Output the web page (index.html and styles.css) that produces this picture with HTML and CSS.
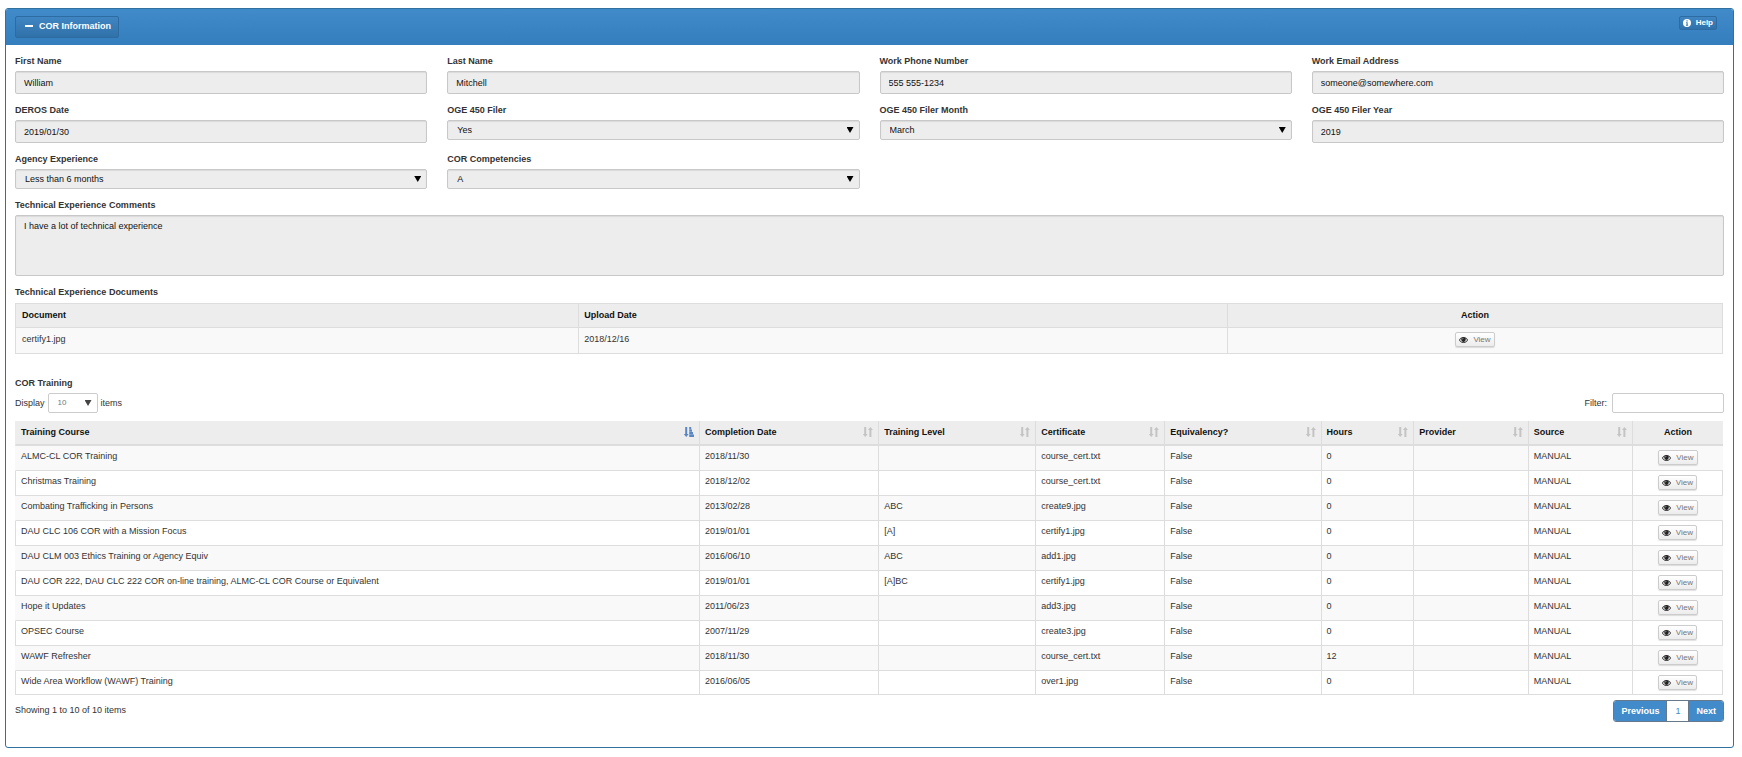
FILE: index.html
```html
<!DOCTYPE html>
<html lang="en">
<head>
<meta charset="utf-8">
<title>COR Information</title>
<link rel="stylesheet" href="styles.css">
</head>
<body>
<svg class="sprite" aria-hidden="true">
  <symbol id="i-eye" viewBox="0 0 18 12"><path fill-rule="evenodd" d="M9 0C4.500 0 1.500 3 0 6c1.500 3 4.500 6 9 6s7.500-3 9-6c-1.500-3-4.500-6-9-6zM9 10.500C5.500 10.500 3.200 8.500 1.900 6c.8-1.500 2-2.800 3.500-3.600a4.500 4.500 0 1 0 7.200 0C14.100 3.200 15.300 4.500 16.100 6c-1.300 2.500-3.600 4.500-7.100 4.500zM8.500 2.300a2 2 0 0 0-2 2.200h1.200c0-.7.400-1.100 1.100-1.200z"/></symbol>
  <symbol id="i-sort" viewBox="0 0 10 10"><path d="M1.200 0h2v7h1.500L2.200 10-.2 7h1.400zM6.400 10h2V3h1.500L7.400 0 5 3h1.400z"/></symbol>
  <symbol id="i-sorted" viewBox="0 0 10 10"><path d="M1.200 0h2v7h1.500L2.200 10-.2 7h1.400zM5.200 0h2v2.300h-2zM5.200 2.600h2.800v2.200H5.200zM5.200 5.100h3.800v2.200H5.200zM5.200 7.600H10V10H5.200z"/></symbol>
  <symbol id="i-info" viewBox="0 0 10 10"><path fill-rule="evenodd" d="M5 0a5 5 0 1 1 0 10A5 5 0 0 1 5 0zM4.300 1.600v1.400h1.500V1.600zM3.700 4v1h.7v2.300h-.7v1h2.700v-1h-.6V4z"/></symbol>
</svg>
<main class="panel">
  <header class="panel-head">
    <button class="btn-blue toggle" type="button"><span class="minus"></span>COR Information</button>
    <button class="btn-blue help" type="button"><svg class="info"><use href="#i-info"/></svg>Help</button>
  </header>
  <div class="panel-body">
    <form class="fields">
      <div class="field"><label for="first">First Name</label><input class="control" id="first" value="William" readonly></div>
      <div class="field"><label for="last">Last Name</label><input class="control" id="last" value="Mitchell" readonly></div>
      <div class="field"><label for="phone">Work Phone Number</label><input class="control" id="phone" value="555 555-1234" readonly></div>
      <div class="field"><label for="email">Work Email Address</label><input class="control" id="email" value="someone@somewhere.com" readonly></div>
      <div class="field"><label for="deros">DEROS Date</label><input class="control" id="deros" value="2019/01/30" readonly></div>
      <div class="field"><label for="oge">OGE 450 Filer</label><span class="pick"><select class="control" id="oge" disabled><option>Yes</option></select></span></div>
      <div class="field"><label for="month">OGE 450 Filer Month</label><span class="pick"><select class="control" id="month" disabled><option>March</option></select></span></div>
      <div class="field"><label for="year">OGE 450 Filer Year</label><input class="control" id="year" value="2019" readonly></div>
      <div class="field"><label for="agency">Agency Experience</label><span class="pick"><select class="control" id="agency" disabled><option>Less than 6 months</option></select></span></div>
      <div class="field"><label for="comp">COR Competencies</label><span class="pick"><select class="control" id="comp" disabled><option>A</option></select></span></div>
      <div class="field wide"><label for="comments">Technical Experience Comments</label><textarea class="control" id="comments" readonly>I have a lot of technical experience</textarea></div>
    </form>

    <h2 class="heading">Technical Experience Documents</h2>
    <table class="grid docs">
      <colgroup><col class="d-doc"><col class="d-date"><col class="d-act"></colgroup>
      <thead><tr><th>Document</th><th>Upload Date</th><th class="act">Action</th></tr></thead>
      <tbody><tr><td>certify1.jpg</td><td>2018/12/16</td><td class="act"><button class="view" type="button"><svg class="eye"><use href="#i-eye"/></svg>View</button></td></tr></tbody>
    </table>

    <h2 class="heading training-title">COR Training</h2>
    <div class="tools">
      <label class="display">Display <span class="pick length"><select><option>10</option></select></span> items</label>
      <label class="filter">Filter: <input type="search"></label>
    </div>
    <table class="grid training">
      <colgroup><col class="c-course"><col class="c-date"><col class="c-level"><col class="c-cert"><col class="c-equiv"><col class="c-hours"><col class="c-prov"><col class="c-src"><col class="c-act"></colgroup>
      <thead><tr>
        <th><div class="sort on">Training Course<svg><use href="#i-sorted"/></svg></div></th>
        <th><div class="sort">Completion Date<svg><use href="#i-sort"/></svg></div></th>
        <th><div class="sort">Training Level<svg><use href="#i-sort"/></svg></div></th>
        <th><div class="sort">Certificate<svg><use href="#i-sort"/></svg></div></th>
        <th><div class="sort">Equivalency?<svg><use href="#i-sort"/></svg></div></th>
        <th><div class="sort">Hours<svg><use href="#i-sort"/></svg></div></th>
        <th><div class="sort">Provider<svg><use href="#i-sort"/></svg></div></th>
        <th><div class="sort">Source<svg><use href="#i-sort"/></svg></div></th>
        <th class="act">Action</th>
      </tr></thead>
      <tbody>
        <tr><td>ALMC-CL COR Training</td><td>2018/11/30</td><td></td><td>course_cert.txt</td><td>False</td><td>0</td><td></td><td>MANUAL</td><td class="act"><button class="view" type="button"><svg class="eye"><use href="#i-eye"/></svg>View</button></td></tr>
        <tr><td>Christmas Training</td><td>2018/12/02</td><td></td><td>course_cert.txt</td><td>False</td><td>0</td><td></td><td>MANUAL</td><td class="act"><button class="view" type="button"><svg class="eye"><use href="#i-eye"/></svg>View</button></td></tr>
        <tr><td>Combating Trafficking in Persons</td><td>2013/02/28</td><td>ABC</td><td>create9.jpg</td><td>False</td><td>0</td><td></td><td>MANUAL</td><td class="act"><button class="view" type="button"><svg class="eye"><use href="#i-eye"/></svg>View</button></td></tr>
        <tr><td>DAU CLC 106 COR with a Mission Focus</td><td>2019/01/01</td><td>[A]</td><td>certify1.jpg</td><td>False</td><td>0</td><td></td><td>MANUAL</td><td class="act"><button class="view" type="button"><svg class="eye"><use href="#i-eye"/></svg>View</button></td></tr>
        <tr><td>DAU CLM 003 Ethics Training or Agency Equiv</td><td>2016/06/10</td><td>ABC</td><td>add1.jpg</td><td>False</td><td>0</td><td></td><td>MANUAL</td><td class="act"><button class="view" type="button"><svg class="eye"><use href="#i-eye"/></svg>View</button></td></tr>
        <tr><td>DAU COR 222, DAU CLC 222 COR on-line training, ALMC-CL COR Course or Equivalent</td><td>2019/01/01</td><td>[A]BC</td><td>certify1.jpg</td><td>False</td><td>0</td><td></td><td>MANUAL</td><td class="act"><button class="view" type="button"><svg class="eye"><use href="#i-eye"/></svg>View</button></td></tr>
        <tr><td>Hope it Updates</td><td>2011/06/23</td><td></td><td>add3.jpg</td><td>False</td><td>0</td><td></td><td>MANUAL</td><td class="act"><button class="view" type="button"><svg class="eye"><use href="#i-eye"/></svg>View</button></td></tr>
        <tr><td>OPSEC Course</td><td>2007/11/29</td><td></td><td>create3.jpg</td><td>False</td><td>0</td><td></td><td>MANUAL</td><td class="act"><button class="view" type="button"><svg class="eye"><use href="#i-eye"/></svg>View</button></td></tr>
        <tr><td>WAWF Refresher</td><td>2018/11/30</td><td></td><td>course_cert.txt</td><td>False</td><td>12</td><td></td><td>MANUAL</td><td class="act"><button class="view" type="button"><svg class="eye"><use href="#i-eye"/></svg>View</button></td></tr>
        <tr><td>Wide Area Workflow (WAWF) Training</td><td>2016/06/05</td><td></td><td>over1.jpg</td><td>False</td><td>0</td><td></td><td>MANUAL</td><td class="act"><button class="view" type="button"><svg class="eye"><use href="#i-eye"/></svg>View</button></td></tr>
      </tbody>
    </table>
    <footer class="foot">
      <span>Showing 1 to 10 of 10 items</span>
      <nav class="pager" aria-label="Pages"><a href="#">Previous</a><a class="current" href="#">1</a><a href="#">Next</a></nav>
    </footer>
  </div>
</main>
</body>
</html>
```

FILE: styles.css
```css
* { box-sizing: border-box; }
body {
  margin: 8px 8px 8px 5px;
  background: #fff;
  color: #333;
  font: 9px/14px "Liberation Sans", Arial, sans-serif;
}
button, input, select, textarea { font: inherit; margin: 0; }
.sprite { display: none; }
svg { display: block; fill: currentColor; }

.panel { border: 1px solid #31719f; border-radius: 3px; overflow: hidden; }
.panel-head {
  display: flex;
  justify-content: space-between;
  align-items: flex-start;
  margin: -1px -1px 0;
  padding: 8px 17px 7px 10px;
  background: linear-gradient(#428bca, #357ebd);
}
.btn-blue {
  display: flex;
  align-items: center;
  border: 1px solid #2d6ca2;
  border-radius: 2px;
  background: linear-gradient(#3f86c3, #3071a9);
  color: #fff;
  font-weight: bold;
}
.toggle { gap: 6px; height: 22px; padding: 0 7px 2px 9px; }
.minus { width: 8px; height: 2px; background: #fff; }
.help { gap: 5px; height: 14px; padding: 0 3px; line-height: 12px; font-size: 8px; }
.info { width: 8px; height: 8px; }

.panel-body { padding: 8px 9px 25px; }
.fields {
  display: grid;
  grid-template-columns: repeat(4, 1fr);
  gap: 8px 20px;
  align-items: start;
}
.field { display: grid; gap: 2px; }
.wide { grid-column: 1 / -1; }
.field label, .heading {
  margin: 0;
  color: #333;
  font-size: 9px;
  font-weight: bold;
  line-height: 16px;
}
.control {
  width: 100%;
  height: 23px;
  padding: 0 8px;
  border: 1px solid #c8c8c8;
  border-radius: 2px;
  background: #ededed;
  box-shadow: inset 0 1px 1px rgba(0, 0, 0, .08);
  color: #111;
  opacity: 1;
}
textarea.control { height: 61px; padding: 3px 8px; resize: none; }
.pick { display: inline-grid; align-items: center; }
.pick select { grid-area: 1 / 1; height: 20px; padding: 0 9px; appearance: none; }
.pick::after {
  content: "";
  grid-area: 1 / 1;
  justify-self: end;
  width: 7px;
  height: 6px;
  margin-right: 6px;
  background: #000;
  clip-path: polygon(0 0, 100% 0, 50% 100%);
  pointer-events: none;
}

.fields + .heading { margin: 8px 0 3px; }
.grid {
  width: calc(100% - 1px);
  table-layout: fixed;
  border-collapse: separate;
  border-spacing: 0;
}
.grid th { background: #ededed; color: #111; text-align: left; }
.grid td { background: #f9f9f9; vertical-align: top; }
.grid .act { text-align: center; }
.grid th, .grid td { padding: 0 5px; border: 0 solid #ddd; border-left-width: 1px; }
.grid th { padding-bottom: 2px; }

.docs { border: 1px solid #ddd; border-left: 0; }
.docs th { height: 23px; }
.docs td { height: 26px; padding-top: 4px; border-top-width: 1px; }
.docs th:first-child, .docs td:first-child { padding-left: 6px; }
.d-doc { width: 33%; }
.d-date { width: 38%; }
.d-act { width: 29%; }

.training-title { margin-top: 21px; }
.tools { display: flex; justify-content: space-between; margin: 2px 0 8px; }
.tools label { display: flex; align-items: center; gap: 3px; }
.length select {
  width: 50px;
  border: 1px solid #ccc;
  border-radius: 2px;
  background: #fff;
  color: #777;
  font-size: 8px;
}
.length::after { background: #444; }
.filter input {
  width: 112px;
  height: 20px;
  border: 1px solid #ccc;
  border-radius: 2px;
  appearance: none;
}
.tools .filter { gap: 5px; }

.training th { height: 25px; border-bottom: 2px solid #ddd; }
.training th:first-child { border-left-color: #ededed; }
.training td { height: 25px; padding-top: 3px; border-bottom-width: 1px; }
.training tr:nth-child(odd) td:first-child { border-left-color: #f9f9f9; }
.training tr:nth-child(even) td { background: #fff; }
.training tr:nth-child(even) td:last-child { border-right-width: 1px; }
.training tr:last-child td { height: 24px; }
.c-course { width: 40.04%; }
.c-date { width: 10.5%; }
.c-level { width: 9.2%; }
.c-cert { width: 7.55%; }
.c-equiv { width: 9.15%; }
.c-hours { width: 5.43%; }
.c-prov { width: 6.7%; }
.c-src { width: 6.1%; }
.c-act { width: 5.33%; }
.sort { display: flex; align-items: center; justify-content: space-between; }
.sort svg { width: 10px; height: 10px; color: #c4c4c4; }
.sort.on svg { color: #5b86c4; }

.view {
  display: inline-flex;
  align-items: center;
  gap: 5px;
  height: 15px;
  padding: 0 3px;
  border: 1px solid #ccc;
  border-radius: 2px;
  background: linear-gradient(#fff, #ececec);
  box-shadow: 0 1px 1px rgba(0, 0, 0, .12);
  color: #777;
  font-size: 8px;
  line-height: 12px;
  vertical-align: top;
}
.training .act .view { margin-top: 1px; }
.eye { width: 9px; height: 6px; color: #222; }

.foot { display: flex; justify-content: space-between; align-items: flex-start; padding-top: 5px; }
.foot span { padding-top: 3px; }
.pager {
  display: flex;
  border: 1px solid #66788a;
  border-radius: 3px;
  overflow: hidden;
}
.pager a {
  padding: 0 7px;
  background: #428bca;
  color: #fff;
  font-weight: bold;
  line-height: 20px;
  text-decoration: none;
}
.pager .current {
  padding: 0 8px;
  border: solid #66788a;
  border-width: 0 1px;
  background: #fff;
  color: #428bca;
  font-weight: normal;
}
```
